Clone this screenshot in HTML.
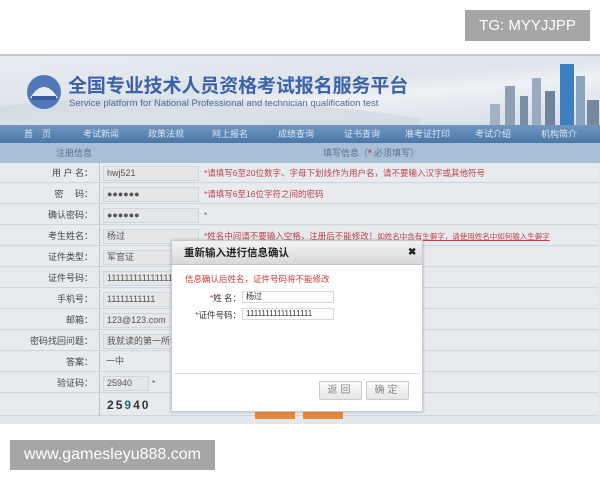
<!DOCTYPE html>
<html><head><meta charset="utf-8"><style>
*{margin:0;padding:0;box-sizing:border-box}
body{width:600px;height:480px;background:#fff;position:relative;overflow:hidden;font-family:"Liberation Sans","Noto Sans CJK SC",sans-serif;font-size:9px;color:#333}
.abs{position:absolute}
.tg{left:465px;top:10px;width:125px;height:31px;background:#a6a6a6;color:#fff;font-size:15px;line-height:31px;text-align:center}
.wm{left:10px;top:440px;width:205px;height:30px;background:#a6a6a6;color:#fff;font-size:16px;line-height:30px;text-align:center}
.frame{left:0;top:54px;width:600px;height:370px;background:#e4e8ec;border-top:2px solid #c8c8c8}
.banner{left:0;top:56px;width:600px;height:69px;background:linear-gradient(175deg,#e9ecf1 0%,#dfe4eb 45%,#eef1f5 60%,#d4dbe5 100%)}
.nav{left:0;top:125px;width:600px;height:18px;background:linear-gradient(#6f97c1,#4a77a8);color:#dbe6f2;font-size:9px;line-height:18px}
.nav span{position:absolute;top:0}
.sub{left:0;top:143px;width:600px;height:20px;background:#a8bfd8;color:#5a6f8a;line-height:20px;font-size:9px}
.row{position:absolute;left:0;width:598px;height:20px;background:#e8ebee;border-bottom:1px solid #cfd6de}
.row .l{position:absolute;left:0;width:100px;height:20px;text-align:right;padding-right:6px;line-height:20px;font-size:9px;color:#444;border-right:1px solid #b9c3cf}
.row .i{position:absolute;left:103px;top:3px;width:96px;height:15px;background:#e4e6e8;border:1px solid #d2d5d9;line-height:13px;padding-left:3px;font-size:9px;color:#555}
.row .h{position:absolute;left:204px;top:0;line-height:20px;color:#c0404a;font-size:8.5px}
.dlg{left:171px;top:240px;width:252px;height:172px;background:#fff;border:1px solid #c9c9c9;box-shadow:0 0 3px rgba(0,0,0,.25)}
.dt{left:0;top:0;width:250px;height:24px;background:linear-gradient(#f2f2f2,#d8d8d8);border-bottom:1px solid #c4c4c4;font-weight:bold;font-size:10.5px;line-height:24px;padding-left:12px;color:#222}
.btn{width:43px;height:19px;border:1px solid #ccc;background:linear-gradient(#fafafa,#e6e6e6);border-radius:2px;color:#888;text-align:center;line-height:17px;font-size:10px;letter-spacing:3px}
.di{width:92px;height:12px;border:1px solid #d8d8d8;font-size:8px;line-height:10px;padding-left:3px}
</style></head><body>
<div class="abs tg">TG: MYYJJPP</div>
<div class="abs frame"></div>
<div class="abs banner">
<svg class="abs" style="left:0;top:0" width="600" height="69">
<path d="M0 50 Q200 30 420 62 L420 69 L0 69Z" fill="#cdd5e0" opacity=".6"/>
<rect x="505" y="30" width="10" height="39" fill="#8fa0b4"/><rect x="520" y="40" width="8" height="29" fill="#7a8da3"/>
<rect x="532" y="22" width="9" height="47" fill="#9aabbf"/><rect x="545" y="35" width="10" height="34" fill="#6f849c"/>
<rect x="560" y="8" width="14" height="61" fill="#3f7fc0"/><rect x="576" y="20" width="9" height="49" fill="#8aa5c2"/>
<rect x="587" y="44" width="12" height="25" fill="#758aa0"/><rect x="490" y="48" width="10" height="21" fill="#a4b2c2"/>
<circle cx="44" cy="36" r="17" fill="#4f78b8"/><path d="M30 42 Q44 20 58 42 Z" fill="#e6ecf5"/><rect x="32" y="40" width="24" height="4" fill="#3a5f9c"/>
</svg>
<div class="abs" style="left:68px;top:21px;font-size:19px;line-height:19px;font-weight:bold;color:#3b63aa;letter-spacing:-0.1px">全国专业技术人员资格考试报名服务平台</div>
<div class="abs" style="left:69px;top:43px;font-size:9.5px;line-height:10px;color:#4b6a98">Service platform for National Professional and technician qualification test</div>
</div>
<div class="abs nav"><span style="left:24px">首　页</span><span style="left:83px">考试新闻</span><span style="left:148px">政策法规</span><span style="left:212px">网上报名</span><span style="left:278px">成绩查询</span><span style="left:344px">证书查询</span><span style="left:405px">准考证打印</span><span style="left:475px">考试介绍</span><span style="left:541px">机构简介</span></div>
<div class="abs sub"><span class="abs" style="left:56px">注册信息</span><span class="abs" style="left:323px">填写信息（<b style="color:#d33">*</b> 必须填写）</span></div>
<div class="row" style="top:163px"><div class="l">用 户 名：</div><div class="i">hwj521</div><div class="h">*请填写6至20位数字、字母下划线作为用户名，请不要输入汉字或其他符号</div></div>
<div class="row" style="top:184px"><div class="l">密　 码：</div><div class="i" style="font-weight:bold">●●●●●●</div><div class="h">*请填写6至16位字符之间的密码</div></div>
<div class="row" style="top:205px"><div class="l">确认密码：</div><div class="i" style="font-weight:bold">●●●●●●</div><div class="h">*</div></div>
<div class="row" style="top:226px"><div class="l">考生姓名：</div><div class="i">杨过</div><div class="h">*姓名中间请不要输入空格，注册后不能修改！<u style="font-size:7.5px">如姓名中含有生僻字，请使用姓名中如何输入生僻字</u></div></div>
<div class="row" style="top:247px"><div class="l">证件类型：</div><div class="i">军官证</div></div>
<div class="row" style="top:268px"><div class="l">证件号码：</div><div class="i">111111111111111</div></div>
<div class="row" style="top:289px"><div class="l">手机号：</div><div class="i">11111111111</div></div>
<div class="row" style="top:310px"><div class="l">邮箱：</div><div class="i">123@123.com</div></div>
<div class="row" style="top:331px"><div class="l">密码找回问题：</div><div class="i">我就读的第一所学校</div></div>
<div class="row" style="top:352px"><div class="l">答案：</div><div class="i" style="background:none;border:none">一中</div></div>
<div class="row" style="top:373px"><div class="l">验证码：</div><div class="i" style="width:46px">25940</div><div class="h" style="left:152px;color:#555">*</div></div>
<div class="row" style="top:394px;height:22px"><div class="l" style="height:22px"></div><div class="abs" style="left:107px;top:4px;font-size:12px;font-weight:bold;letter-spacing:2px;color:#333">2<span style="color:#234">5</span><span style="color:#1a6a6a">9</span>40</div></div>
<div class="abs" style="left:255px;top:410px;width:40px;height:9px;background:#e8883a"></div>
<div class="abs" style="left:303px;top:410px;width:40px;height:9px;background:#e8883a"></div>
<div class="abs dlg">
<div class="abs dt">重新输入进行信息确认<span class="abs" style="left:236px;font-size:10px">✖</span></div>
<div class="abs" style="left:13px;top:32px;color:#d0383a;font-size:8.5px">信息确认后姓名，证件号码将不能修改</div>
<div class="abs" style="left:20px;top:51px;width:49px;text-align:right;font-size:8.5px"><span style="color:#d33">*</span>姓 名：</div>
<div class="abs di" style="left:70px;top:50px">杨过</div>
<div class="abs" style="left:10px;top:68px;width:59px;text-align:right;font-size:8.5px"><span style="color:#d33">*</span>证件号码：</div>
<div class="abs di" style="left:70px;top:67px">11111111111111111</div>
<div class="abs" style="left:2px;top:132px;width:246px;height:1px;background:#ddd"></div>
<div class="abs btn" style="left:147px;top:140px">返回</div>
<div class="abs btn" style="left:194px;top:140px">确定</div>
</div>
<div class="abs wm">www.gamesleyu888.com</div>
</body></html>
